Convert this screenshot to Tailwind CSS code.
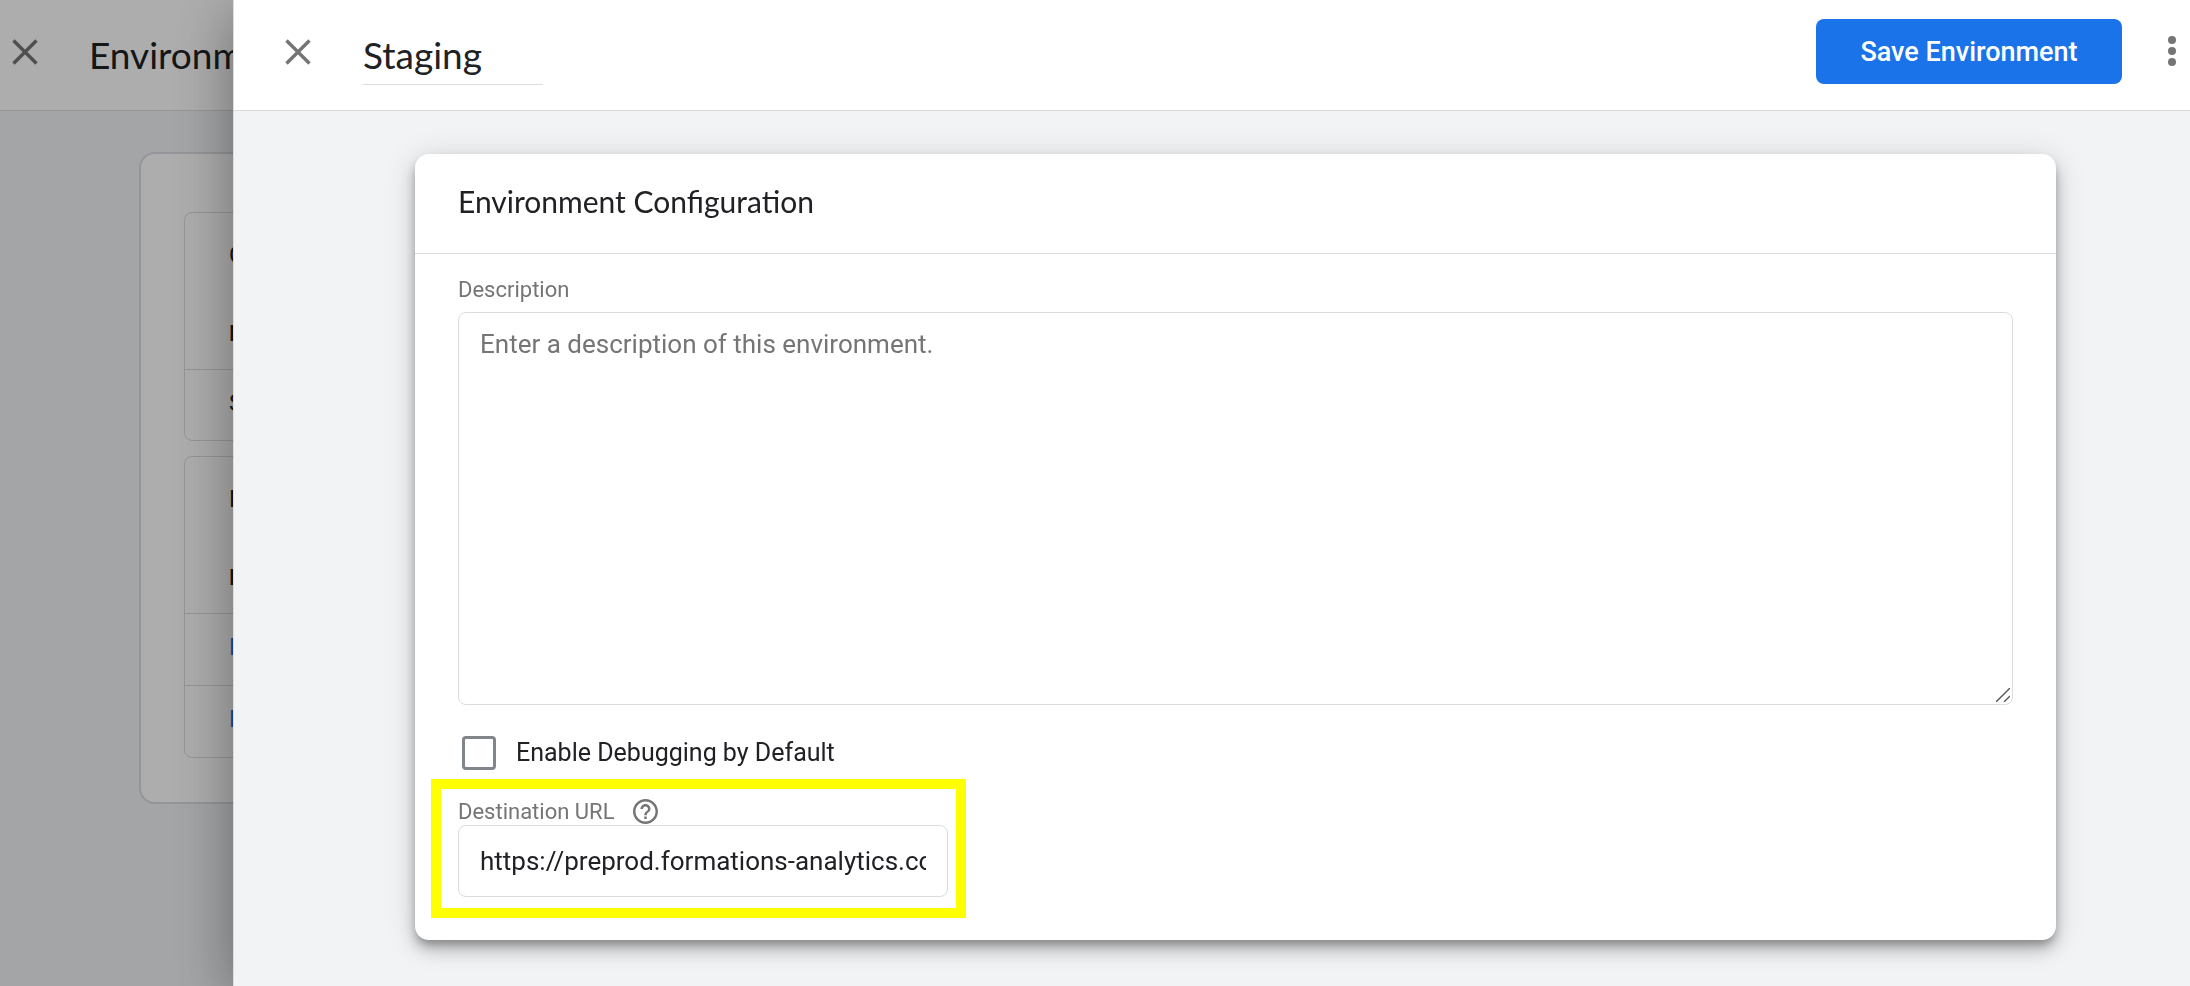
<!DOCTYPE html>
<html lang="en">

<head>
    <meta charset="UTF-8">
    <meta name="viewport" content="width=device-width, initial-scale=1.0">
    <title>Environment Configuration</title>
    <script src="https://cdn.jsdelivr.net/npm/@tailwindcss/browser@4"></script>
</head>

<body class="min-h-screen overflow-hidden bg-[#f1f3f6] font-['Roboto',sans-serif] text-[#202124]">
    <!-- Environments list behind the drawer -->
    <main>
        <header class="flex h-[111px] items-center border-b border-[#dadce0] bg-white">
            <button type="button" aria-label="Close" class="ml-3 mb-1.5">
                <svg class="size-[26px]" viewBox="0 0 26 26" fill="none" stroke="#757575" stroke-width="3.4"><path d="M1.5 1.5l23 23M24.5 1.5l-23 23" /></svg>
            </button>
            <h1 class="ml-[51px] text-[37px] leading-[44px] font-['Lato',sans-serif]">Environments</h1>
        </header>

        <div class="mt-[41px] mr-[140px] ml-[139px] flex flex-col gap-[15px] rounded-2xl border-2 border-[#dadce0] bg-white px-[43px] pt-[58px] pb-[44px] text-[24px]">
            <section class="rounded-lg border border-[#dadce0]">
                <h2 class="px-11 pt-6 leading-[36px]">Custom</h2>
                <table class="mt-[25px] w-full text-left">
                    <thead>
                        <tr class="h-[71px] border-b border-[#dadce0] text-[22px]"><th class="px-11 font-medium">Environment Name</th></tr>
                    </thead>
                    <tbody>
                        <tr class="h-[71px]"><td class="px-11 pb-1">Staging</td></tr>
                    </tbody>
                </table>
            </section>
            <section class="rounded-lg border border-[#dadce0]">
                <h2 class="px-11 pt-6 leading-[36px]">Default</h2>
                <table class="mt-[25px] w-full text-left">
                    <thead>
                        <tr class="h-[71px] border-b border-[#dadce0] text-[22px]"><th class="px-11 font-medium">Environment Name</th></tr>
                    </thead>
                    <tbody>
                        <tr class="h-[72px] border-b border-[#dadce0]"><td class="px-11 pb-1"><a href="#" class="text-[#1a73e8]">Live</a></td></tr>
                        <tr class="h-[72px]"><td class="px-11 pb-1"><a href="#" class="text-[#1a73e8]">Latest</a></td></tr>
                    </tbody>
                </table>
            </section>
        </div>
    </main>

    <div class="fixed inset-0 bg-black/32"></div>

    <!-- Drawer -->
    <aside class="fixed inset-y-0 right-0 left-[233px] flex flex-col border-l border-[#dadce0] bg-[#f1f3f5] shadow-[0_12px_56px_rgba(0,0,0,0.38)]">
        <header class="flex h-[111px] shrink-0 items-center border-b border-[#dadce0] bg-white pr-3">
            <button type="button" aria-label="Close" class="ml-[51px] mb-1.5">
                <svg class="size-[26px]" viewBox="0 0 26 26" fill="none" stroke="#757575" stroke-width="3.4"><path d="M1.5 1.5l23 23M24.5 1.5l-23 23" /></svg>
            </button>
            <input type="text" aria-label="Environment name" value="Staging" class="ml-[52px] mt-1.5 h-[54px] w-[180px] border-b border-[#dadce0] pb-1.5 text-[37px] font-['Lato',sans-serif] outline-none">
            <button type="button" class="mr-[44px] mb-2 ml-auto h-[65px] w-[306px] rounded-lg bg-[#1a73e8] pt-0.5 text-[27px] font-medium text-white">Save Environment</button>
            <button type="button" aria-label="More" class="mb-2">
                <svg class="h-[30px] w-3" viewBox="0 0 12 30" fill="#757575"><circle cx="6" cy="4" r="4" /><circle cx="6" cy="15" r="4" /><circle cx="6" cy="26" r="4" /></svg>
            </button>
        </header>

        <form class="mt-[43px] mr-[134px] ml-[181px] rounded-[14px] bg-white pb-[22px] shadow-[0_6px_10px_-2px_rgba(0,0,0,0.28),0_10px_16px_rgba(0,0,0,0.18),0_4px_32px_rgba(0,0,0,0.14)]">
            <h2 class="border-b border-[#dadce0] px-[43px] pt-[27px] pb-[32px] text-[30px] leading-[40px] font-['Lato',sans-serif]">Environment Configuration</h2>

            <div class="px-[43px] pt-[22px]">
                <label for="description" class="block text-[22px] leading-[28px] text-[#757575]">Description</label>
                <div class="relative mt-2">
                    <textarea id="description" class="block h-[393px] w-full resize-none rounded-lg border border-[#dadce0] px-[21px] py-[13px] text-[26px] leading-[36px] outline-none placeholder:text-[#757575]" placeholder="Enter a description of this environment."></textarea>
                    <!-- Resize grip -->
                    <svg class="absolute right-[3px] bottom-[3px] size-[14px]" viewBox="0 0 14 14" stroke="#555" stroke-width="1.4"><path d="M0 14L14 0M8 14l6-6" /></svg>
                </div>
            </div>

            <div class="mt-7 flex items-center gap-5 px-[47px]">
                <input id="debugging" type="checkbox" class="size-[34px] appearance-none rounded-sm border-3 border-[#80868b]">
                <label for="debugging" class="text-[25px] leading-[40px]">Enable Debugging by Default</label>
            </div>

            <!-- Highlighted field -->
            <div class="mt-1.5 ml-4 w-[535px] border-10 border-[#ffff00] px-[17px] pt-2.5 pb-[11px]">
                <div class="flex h-[26px] items-center gap-[18px] pb-0.5 text-[22px] text-[#757575]">
                    <label for="url">Destination URL</label>
                    <svg class="size-[25px]" viewBox="0 0 20 20" fill="#757575" aria-hidden="true"><path d="M9 16h2v-2H9v2zm1-16C4.480 0 0 4.480 0 10s4.480 10 10 10 10-4.480 10-10S15.520 0 10 0zm0 18c-4.410 0-8-3.590-8-8s3.590-8 8-8 8 3.590 8 8-3.590 8-8 8zm0-14c-2.210 0-4 1.790-4 4h2c0-1.100.9-2 2-2s2 .9 2 2c0 2-3 1.750-3 5h2c0-2.250 3-2.500 3-5 0-2.210-1.790-4-4-4z" /></svg>
                </div>
                <input id="url" type="text" value="https://preprod.formations-analytics.com" class="block h-[72px] w-[490px] rounded-lg border border-[#dadce0] px-[21px] text-[26px] outline-none">
            </div>
        </form>
    </aside>
</body>

</html>
